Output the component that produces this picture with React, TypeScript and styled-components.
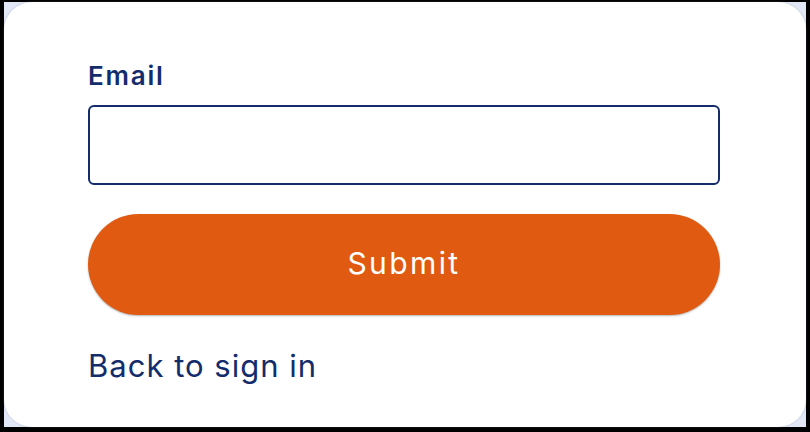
import styled, { createGlobalStyle } from "styled-components";

const GlobalStyle = createGlobalStyle`
  html, body {
    margin: 0;
    padding: 0;
    background: #000000;
  }
  * {
    box-sizing: border-box;
  }
`;

const Frame = styled.div`
  width: 810px;
  height: 432px;
  padding: 2px 4px 5px 4px;
  background: #000000;
`;

const Backdrop = styled.div`
  width: 100%;
  height: 100%;
  background: #e2e8f6;
`;

const Card = styled.div`
  width: 100%;
  height: 100%;
  background: #ffffff;
  border-radius: 28px;
  box-shadow: 0 0 2px rgba(120, 130, 150, 0.45);
  padding: 57px 86px 0 84px;
  display: flex;
  flex-direction: column;
  font-family: "Inter", "Liberation Sans", sans-serif;
  color: #132c6b;
`;

const Label = styled.label`
  font-size: 26px;
  font-weight: 600;
  line-height: 34px;
  letter-spacing: 1.8px;
  margin-bottom: 12px;
`;

const Input = styled.input`
  width: 100%;
  height: 80px;
  border: 2px solid #132c6b;
  border-radius: 6px;
  background: #ffffff;
  font-size: 22px;
  padding: 0 16px;
  outline: none;
`;

const SubmitButton = styled.button`
  margin-top: 29px;
  width: 100%;
  height: 101px;
  padding: 0 0 4px 0;
  border: none;
  border-radius: 51px;
  background: #e05a12;
  color: #ffffff;
  font-family: "Inter", "Liberation Sans", sans-serif;
  font-size: 30px;
  font-weight: 400;
  letter-spacing: 2.4px;
  box-shadow: 0 1px 2px rgba(90, 90, 90, 0.45);
  cursor: pointer;
`;

const BackLink = styled.a`
  margin-top: 33px;
  font-size: 31px;
  line-height: 36px;
  letter-spacing: 1px;
  color: #132c6b;
  text-decoration: none;
  cursor: pointer;
  align-self: flex-start;
`;

export default function App() {
  return (
    <>
      <GlobalStyle />
      <Frame>
        <Backdrop>
          <Card>
            <Label htmlFor="email">Email</Label>
            <Input id="email" type="email" />
            <SubmitButton>Submit</SubmitButton>
            <BackLink>Back to sign in</BackLink>
          </Card>
        </Backdrop>
      </Frame>
    </>
  );
}
